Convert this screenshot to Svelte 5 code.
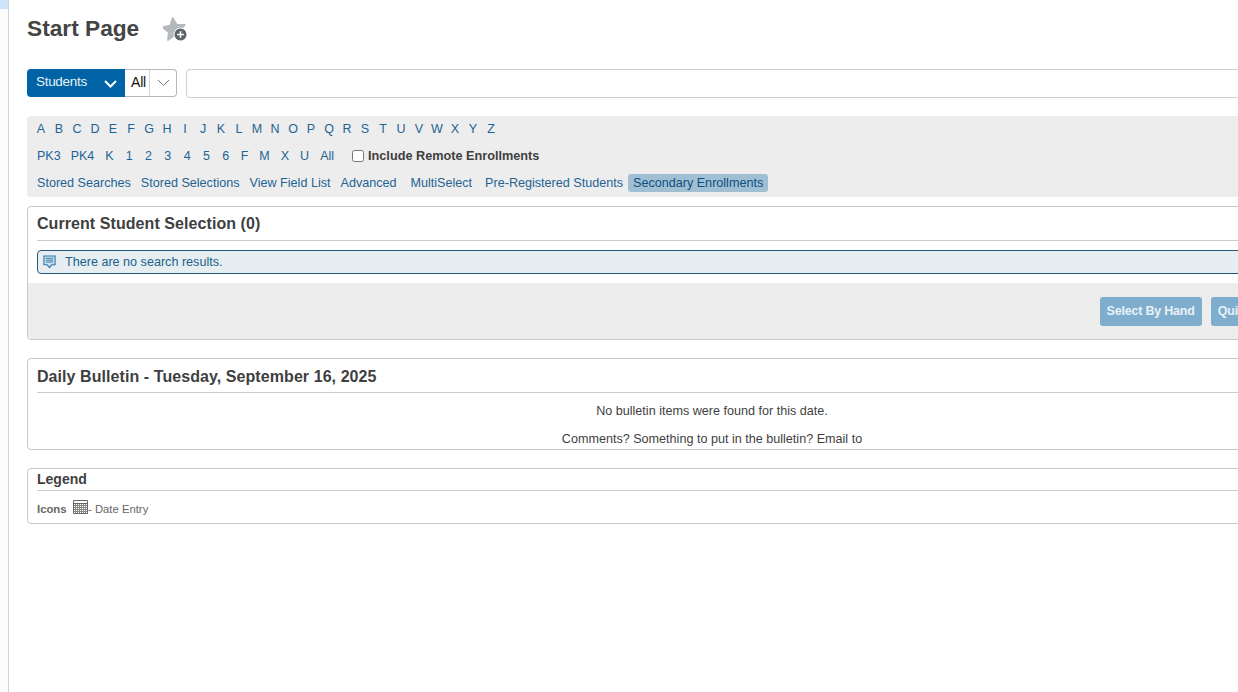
<script>
  const letters = 'ABCDEFGHIJKLMNOPQRSTUVWXYZ'.split('');
  const grades = ['PK3','PK4','K','1','2','3','4','5','6','F','M','X','U','All'];
  const links = ['Stored Searches','Stored Selections','View Field List','Advanced','MultiSelect','Pre-Registered Students'];
</script>

<div class="shell">
  <aside class="rail"><div class="rail-tab"></div></aside>
  <main class="main">
    <header class="title-row">
      <h1>Start Page</h1>
      <svg class="fav" width="25" height="25" viewBox="0 0 25 25" aria-hidden="true">
        <path transform="rotate(-6 11 12) translate(-0.500 -0.800) scale(1.080)" d="M10.500 1.500l3 6.700 7.500.9-5.500 5 1.500 7.400-6.500-3.700-6.500 3.700 1.500-7.400-5.500-5 7.500-.9z" fill="#b4b9bc" stroke="#b4b9bc" stroke-width="1.500" stroke-linejoin="round"/>
        <circle cx="17.500" cy="17.500" r="6.500" fill="#5e6468" stroke="#fff" stroke-width="1"/>
        <path d="M14.200 17.500h6.600M17.500 14.200v6.600" stroke="#fff" stroke-width="1.500"/>
      </svg>
    </header>

    <div class="search-row">
      <div class="students">
        <span>Students</span>
        <svg width="13" height="8" viewBox="0 0 13 8"><path d="M1 1l5.500 5.500L12 1" fill="none" stroke="#fff" stroke-width="2"/></svg>
      </div>
      <div class="all">
        <span class="all-label">All</span>
        <span class="all-arrow"><svg width="13" height="8" viewBox="0 0 13 8"><path d="M1 1l5.500 5.500L12 1" fill="none" stroke="#777" stroke-width="1"/></svg></span>
      </div>
      <div class="search-input"></div>
    </div>

    <section class="filters">
      <div class="frow letters">
        {#each letters as l}<a href="#a">{l}</a>{/each}
      </div>
      <div class="frow grades">
        {#each grades as g}<a href="#g">{g}</a>{/each}
        <label class="remote"><input type="checkbox" /><span>Include Remote Enrollments</span></label>
      </div>
      <div class="frow links">
        {#each links as k}<a href="#l">{k}</a>{/each}
        <a href="#s" class="active">Secondary Enrollments</a>
      </div>
    </section>

    <section class="card selection">
      <h2>Current Student Selection (0)</h2>
      <div class="notice">
        <svg width="13" height="14" viewBox="0 0 14 15" aria-hidden="true">
          <path d="M1 1h12v9.500H9.500L7 13.500 4.500 10.500H1z" fill="#cfe0ec" stroke="#2f78ad" stroke-width="1.200"/>
          <path d="M3 3.500h8M3 5.500h8M3 7.500h8" stroke="#2f78ad" stroke-width="1"/>
        </svg>
        <span>There are no search results.</span>
      </div>
      <div class="actions">
        <button>Select By Hand</button>
        <button>Quick Add</button>
      </div>
    </section>

    <section class="card bulletin">
      <h2>Daily Bulletin - Tuesday, September 16, 2025</h2>
      <p class="first">No bulletin items were found for this date.</p>
      <p class="second">Comments? Something to put in the bulletin? Email to</p>
    </section>

    <section class="card legend">
      <h3>Legend</h3>
      <div class="legend-body">
        <b>Icons</b>
        <svg width="15" height="14" viewBox="0 0 15 14" aria-hidden="true">
          <path d="M.5.5h14v13H.5z" fill="#fff" stroke="#666"/>
          <path d="M.5 3.500h14" stroke="#666"/>
          <path d="M1 5.500h13M1 7.500h13M1 9.500h13M1 11.500h13M2.500 4v9M4.500 4v9M6.500 4v9M8.500 4v9M10.500 4v9M12.500 4v9" stroke="#888" stroke-width="1"/>
        </svg>
        <span>- Date Entry</span>
      </div>
    </section>
  </main>
</div>

<style>
  :global(html), :global(body) { margin: 0; background: #fff; overflow: hidden; }
  .shell {
    display: flex;
    width: 1238px;
    height: 692px;
    overflow: hidden;
    font-family: "Liberation Sans", Arial, sans-serif;
    color: #3f3f3f;
  }
  .rail { flex: 0 0 8px; border-right: 1px solid #cfd2d6; background: #fbfbfb; }
  .rail-tab { height: 9px; background: #cfe3fb; }
  .main { flex: 0 0 1370px; margin-left: 18px; }

  .title-row { display: flex; align-items: center; height: 57px; box-sizing: border-box; }
  h1 { margin: -2px 0 0; font-size: 22.700px; line-height: 28px; font-weight: 700; color: #444; }
  .fav { margin: 2px 0 0 24px; }

  .search-row { display: flex; margin-top: 12px; height: 28px; font-size: 13.500px; }
  .students {
    width: 98px; box-sizing: border-box;
    display: flex; align-items: center; justify-content: space-between;
    padding: 0 8px 0 9px;
    background: #0063a5; color: #e8f2f8;
    border-radius: 4px 0 0 4px;
    letter-spacing: -0.3px;
  }
  .students span { margin-top: -4px; }
  .students svg { margin-top: 2px; }
  .all {
    width: 52px; box-sizing: border-box; display: flex;
    border: 1px solid #b8b8b8; border-left: 0; border-radius: 0 4px 4px 0;
    color: #111;
  }
  .all-label { width: 25px; padding-left: 6px; box-sizing: border-box; line-height: 24px; border-right: 1px solid #d6d6d6; font-size: 14px; letter-spacing: -0.2px; }
  .all-arrow { flex: 1; display: flex; align-items: center; justify-content: center; }
  .search-input { flex: 1; margin-left: 9px; height: 29px; box-sizing: border-box; border: 1px solid #cfcfcf; border-radius: 4px; background: #fff; }

  .filters {
    display: flow-root;
    margin-top: 19px;
    height: 81px;
    background: #ededed;
    border-radius: 4px;
    padding: 0 10px;
    box-sizing: border-box;
    font-size: 12.600px;
  }
  .filters a { color: #1d6394; text-decoration: none; }
  .frow { display: flex; align-items: center; height: 27px; white-space: nowrap; }
  .letters { margin: -1px 0 0 -5px; }
  .letters a { width: 18px; font-size: 12.500px; flex: none; text-align: center; }
  .grades { font-size: 12.500px; }
  .grades a { margin-right: 10px; }
  .grades a:nth-child(2) { margin-right: 11px; }
  .grades a:nth-child(3) { margin-right: 12px; }
  .grades a:nth-child(n+4) { margin-right: 12.400px; }
  .grades a:nth-child(9) { margin-right: 11.400px; }
  .grades a:nth-child(n+10) { margin-right: 11px; }
  .remote { display: flex; align-items: center; margin-left: 7px; font-weight: 700; font-size: 12.700px; color: #3f3f3f; }
  .remote input { margin: 1px 4px 0 0; width: 12px; height: 12px; }
  .links a { margin-right: 10px; }
  .links a:nth-child(4) { margin-right: 14px; }
  .links a:nth-child(5) { margin-right: 13px; }
  .links a:nth-child(6) { margin-right: 5px; }
  .links a.active { background: #a1bfd3; color: #0d4f7f; border-radius: 3px; padding: 0 5px; line-height: 18px; }

  .card { border: 1px solid #c9c9c9; border-radius: 4px; background: #fff; box-sizing: border-box; }
  h2 { margin: 0 9px; font-size: 16px; letter-spacing: 0.07px; line-height: 33px; height: 34px; font-weight: 700; color: #3f3f3f; border-bottom: 1px solid #cccccc; box-sizing: border-box; }

  .selection { margin-top: 9px; height: 134px; display: flex; flex-direction: column; }
  .notice {
    margin: 9px 0 0 9px; height: 24px; box-sizing: border-box;
    display: flex; align-items: center; gap: 9px;
    padding-left: 5px;
    border: 1px solid #23597e; border-radius: 4px;
    background: #e6eef2; color: #215f8a; font-size: 12.600px;
  }
  .actions {
    margin-top: 9px; flex: 1;
    background: #ededed;
    display: flex; justify-content: flex-end; align-items: flex-start; gap: 9px;
    padding: 14px 111px 0 0;
    border-radius: 0 0 4px 4px;
  }
  button {
    height: 29px; padding: 0 7px 2px; border: 0; border-radius: 3px;
    background: #7fadcd; color: #e8f2f8;
    font: 700 12.500px "Liberation Sans", Arial, sans-serif;
    letter-spacing: -0.2px;
    white-space: nowrap;
  }

  .bulletin { margin-top: 18px; height: 92px; }
  .bulletin h2 { line-height: 35px; }
  .bulletin p { margin: 0; text-align: center; font-size: 12.600px; line-height: 14px; color: #3f3f3f; }
  .first { padding-top: 11px; }
  .second { padding-top: 14px; }

  .legend { margin-top: 18px; height: 56px; }
  h3 { margin: 0 9px; height: 22px; line-height: 20px; font-size: 14px; font-weight: 700; color: #3f3f3f; border-bottom: 1px solid #cccccc; box-sizing: border-box; }
  .legend-body { display: flex; align-items: center; margin: 0 9px; height: 34px; padding-top: 2px; box-sizing: border-box; font-size: 11.300px; color: #666; }
  .legend-body b { margin-right: 6.500px; }
  .legend-body svg { margin-top: -4px; }
</style>
